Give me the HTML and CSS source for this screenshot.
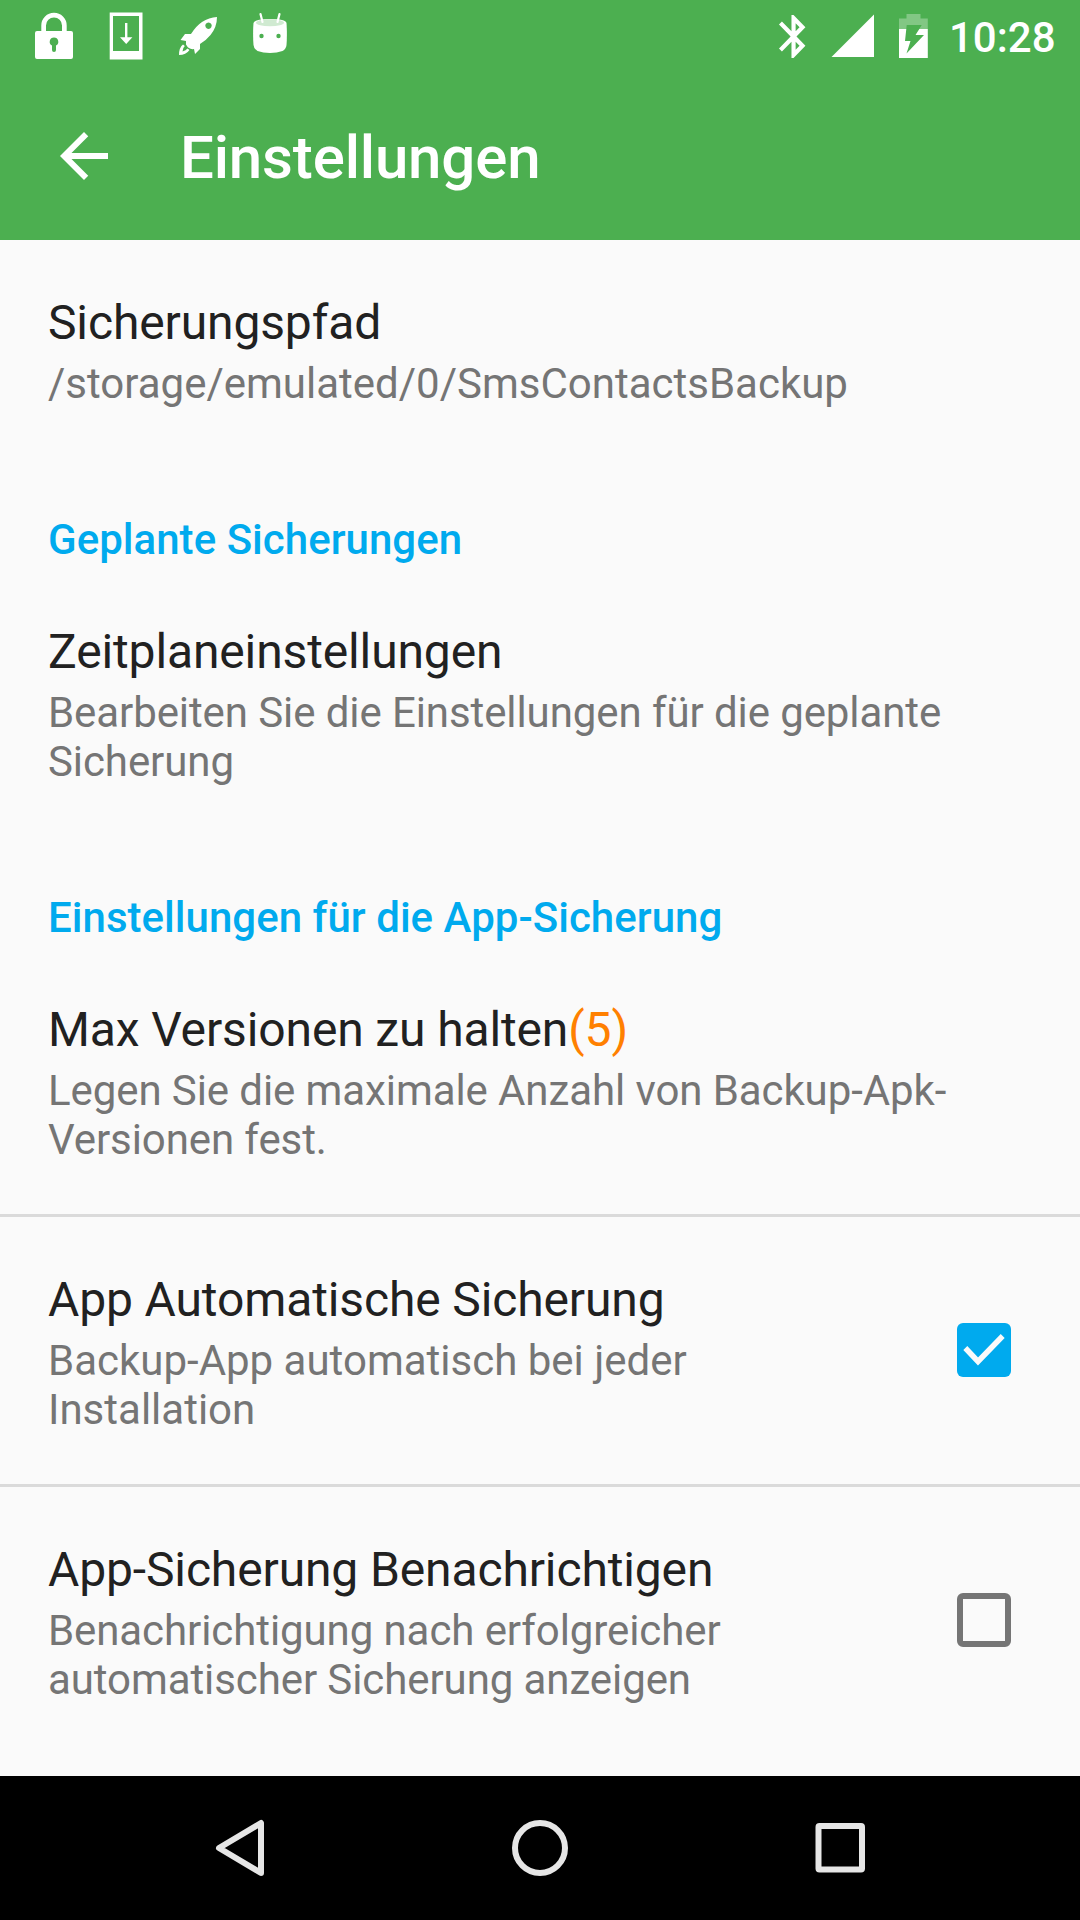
FILE: index.html
```html
<!DOCTYPE html>
<html lang="de">
<head>
<meta charset="utf-8">
<title>Einstellungen</title>
<link rel="stylesheet" href="styles.css">
</head>
<body>
<div class="screen">
  <header class="header">
    <div class="status">
      <div class="status-group">
        <svg class="slot" viewBox="18 0 72 72"><path fill="#fff" fill-rule="evenodd" d="M37 31h4.300v-5.500a12.700 12.700 0 0 1 25.400 0V31H71q2 0 2 2v24q0 2-2 2H37q-2 0-2-2V33q0-2 2-2zM46 31h16v-5.500a8 8 0 0 0-16 0zM54 37.500a4.300 4.300 0 0 0-2 8.100V50a2 2 0 0 0 4 0v-4.400a4.300 4.300 0 0 0-2-8.100z"/></svg>
        <svg class="slot" viewBox="90 0 72 72"><path fill="#fff" fill-rule="evenodd" d="M109.700 12.500h32.800v47h-32.800zM113 16v35h26V16z"/><path fill="#fff" d="M125 23h2.400v14.300h5L126.200 44l-6.200-6.700h5z"/></svg>
        <svg class="slot" viewBox="162 0 72 72"><path fill="#fff" fill-rule="evenodd" d="M217 17q0 10-6.500 18-4.500 5.500-10.500 9v5l-5 5-1-5q-5 1-8-4.500V41l-5.500-1 4.500-6h6q5-8 11-12 7-4.700 15-5zM208.500 22.500a3.200 3.200 0 1 0 .01 0z"/><path fill="#fff" fill-rule="evenodd" d="M183 44.500q-4 3-4 10.500 7 0 10.500-5l-2-1.500q-1.500 2-5 3 0-3.500 2.300-5.500z"/></svg>
        <svg class="slot" viewBox="234 0 72 72"><path fill="#fff" d="M253.500 23q-.8 11 0 22 .5 4 4 6 5.500 2 12.500 2t12.500-2q3.500-2 4-6 .8-11 0-22-1-4-16.500-4t-16.500 4z"/><ellipse cx="270" cy="22.800" rx="14" ry="3.500" fill="#d0ead1"/><path stroke="#fff" stroke-width="2.200" stroke-linecap="round" d="M260.500 14l2 8M279.500 14l-2 8"/><circle cx="261.500" cy="36" r="2.200" fill="#4caf50"/><circle cx="278.500" cy="36" r="2.200" fill="#4caf50"/></svg>
      </div>
      <div class="status-group">
        <svg class="slot slot-narrow" viewBox="762 0 60 72"><path fill="#fff" transform="translate(768.600 10.700) scale(2.080 2.150)" d="M17.710 7.710L12 2h-1v7.590L6.410 5 5 6.410 10.590 12 5 17.590 6.410 19 11 14.410V22h1l5.710-5.710-4.300-4.290 4.300-4.290zM13 5.830l1.880 1.880L13 9.590V5.830zm1.880 10.460L13 18.170v-3.760l1.880 1.880z"/></svg>
        <svg class="slot slot-narrow" viewBox="822 0 60 72"><path fill="#fff" d="M874 14.500V57h-42.500z"/></svg>
        <svg class="slot slot-narrow" viewBox="882 0 60 72"><path fill="#fff" fill-opacity=".3" d="M906.500 14h14v4.500h7.300V29h-8.500l2.400-4h-15l-.4 4H899V18.500h7.500z"/><path fill="#fff" d="M899 29h7.300L905 41h5.500l-4 12.500L924 35h-8.500l3.800-6h8.500v29H899z"/></svg>
        <span class="clock">10:28</span>
      </div>
    </div>
    <div class="toolbar">
      <svg class="back" viewBox="0 0 24 24"><path fill="#fff" d="M20 11H7.830l5.590-5.590L12 4l-8 8 8 8 1.410-1.410L7.830 13H20z"/></svg>
      <h1 class="heading">Einstellungen</h1>
    </div>
  </header>
  <main class="list">
    <section class="pref">
      <div class="pref-text">
        <div class="title">Sicherungspfad</div>
        <div class="summary">/storage/emulated/0/SmsContactsBackup</div>
      </div>
    </section>
    <h2 class="category">Geplante Sicherungen</h2>
    <section class="pref">
      <div class="pref-text">
        <div class="title">Zeitplaneinstellungen</div>
        <div class="summary tight">Bearbeiten Sie die Einstellungen für die geplante Sicherung</div>
      </div>
    </section>
    <h2 class="category">Einstellungen für die App-Sicherung</h2>
    <section class="pref divided">
      <div class="pref-text">
        <div class="title">Max Versionen zu halten<span class="count">(5)</span></div>
        <div class="summary tight">Legen Sie die maximale Anzahl von Backup-Apk-Versionen fest.</div>
      </div>
    </section>
    <section class="pref divided">
      <div class="pref-text">
        <div class="title">App Automatische Sicherung</div>
        <div class="summary">Backup-App automatisch bei jeder Installation</div>
      </div>
      <svg class="check" viewBox="0 0 54 54"><rect width="54" height="54" rx="6" fill="#00aaee"/><path fill="none" stroke="#fafafa" stroke-width="5.500" d="M8.300 25L21 38.500 45.700 13"/></svg>
    </section>
    <section class="pref">
      <div class="pref-text">
        <div class="title">App-Sicherung Benachrichtigen</div>
        <div class="summary tight">Benachrichtigung nach erfolgreicher automatischer Sicherung anzeigen</div>
      </div>
      <svg class="check" viewBox="0 0 54 54"><rect x="3" y="3" width="48" height="48" rx="3" fill="none" stroke="#757575" stroke-width="6"/></svg>
    </section>
  </main>
  <nav class="navbar">
    <svg class="nav-icon" viewBox="0 0 72 72"><path fill="none" stroke="#e6e6e6" stroke-width="6" stroke-linejoin="round" d="M57 11v50L15 36z"/></svg>
    <svg class="nav-icon" viewBox="0 0 72 72"><circle cx="36" cy="36" r="25" fill="none" stroke="#e6e6e6" stroke-width="6"/></svg>
    <svg class="nav-icon" viewBox="0 0 72 72"><rect x="14.500" y="14" width="43.500" height="43.500" rx="1" fill="none" stroke="#e6e6e6" stroke-width="6"/></svg>
  </nav>
</div>
</body>
</html>
```
FILE: styles.css
```css
* { box-sizing: border-box; }
body { margin: 0; font-family: Roboto, "Noto Sans", sans-serif; background: #fafafa; }
svg { display: block; flex: none; }
.screen { width: 1080px; height: 1920px; display: flex; flex-direction: column; overflow: hidden; }
.header { flex: none; height: 240px; background: #4caf50; color: #fff; }
.status { height: 72px; padding: 0 24px 0 18px; display: flex; justify-content: space-between; }
.status-group { display: flex; }
.slot { width: 72px; height: 72px; }
.slot-narrow { width: 60px; }
.clock { width: 114px; padding: 13px 0 0 7px; font-size: 42px; line-height: 49px; font-weight: 500; white-space: nowrap; }
.toolbar { height: 168px; padding-left: 48px; display: flex; align-items: center; }
.back { width: 72px; height: 72px; }
.heading { margin: 4px 0 0 60px; font-size: 60px; line-height: 70px; font-weight: 500; letter-spacing: -0.16px; }
.list { flex: 1; background: #fafafa; }
.pref { padding: 54px 69px 50px 48px; display: flex; align-items: center; justify-content: space-between; }
.divided { border-bottom: 3px solid #dadada; }
.pref-text { flex: 1; max-width: 912px; }
.check { width: 54px; height: 54px; margin: 0 0 5px 69px; }
.title { font-size: 48px; line-height: 57px; color: #212121; white-space: nowrap; letter-spacing: -0.13px; }
.summary { margin-top: 8px; font-size: 42px; line-height: 49px; color: #757575; }
.tight { letter-spacing: -0.09px; }
.count { color: #ff8000; }
.category { margin: 0; padding: 57px 48px 5px; font-size: 42px; line-height: 49px; font-weight: 500; color: #00aaee; letter-spacing: 0.03px; }
.navbar { flex: none; height: 144px; padding: 0 204px; background: #000; display: flex; align-items: center; justify-content: space-between; }
.nav-icon { width: 72px; height: 72px; }
```
